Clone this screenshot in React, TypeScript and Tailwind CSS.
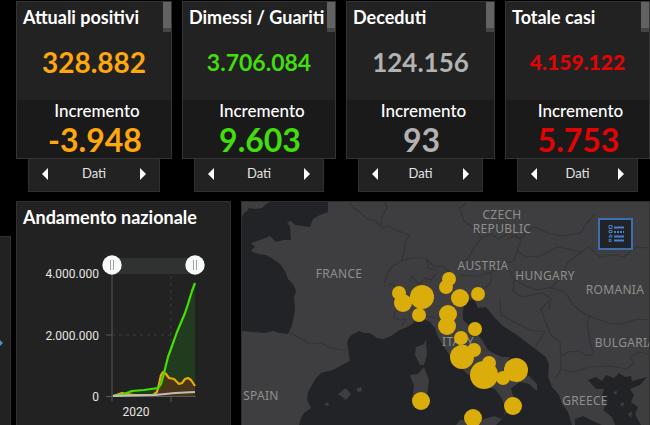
type Stat = {
  title: string;
  value: string;
  change: string;
  color: string;
  valueSize: string;
};

const stats: Stat[] = [
  { title: "Attuali positivi", value: "328.882", change: "-3.948", color: "text-[#ffa80b]", valueSize: "text-[28px] font-bold" },
  { title: "Dimessi / Guariti", value: "3.706.084", change: "9.603", color: "text-[#43dc0c]", valueSize: "text-[23px] font-bold" },
  { title: "Deceduti", value: "124.156", change: "93", color: "text-[#b2b2b2]", valueSize: "text-[26px] font-bold" },
  { title: "Totale casi", value: "4.159.122", change: "5.753", color: "text-[#e00505]", valueSize: "text-[21px] font-black" },
];

function StatCard({ title, value, change, color, valueSize }: Stat) {
  return (
    <section className="min-w-0">
      <div className="border border-[#343434] bg-[#222222]">
        <div className="flex h-[98px] flex-col">
          <div className="flex h-[30px] justify-between">
            <h2 className="pt-[3px] pl-1.5 text-[18px] leading-6 font-bold whitespace-nowrap text-white">{title}</h2>
            <span className="w-2 shrink-0 border-b-4 border-[#454549] bg-[#626262]" />
          </div>
          <p className={`pt-3 text-center leading-9 ${color} ${valueSize}`}>{value}</p>
        </div>
        <div className="h-[58px] bg-[#1a1a1a] text-center">
          <p className="pt-px pl-1.5 text-[17px] leading-5 font-medium text-white">Incremento</p>
          <p className={`pt-px pl-0.5 text-[32px] leading-9 font-bold ${color}`}>{change}</p>
        </div>
      </div>
      <div className="mx-3 flex h-[33px] items-center justify-between border border-t-0 border-[#303030] bg-[#222222] px-3 pb-0.5 text-white">
        <button type="button" aria-label="Precedente">
          <svg viewBox="0 0 8 12" className="h-3 w-2" fill="currentColor"><path d="M7 0v12L1 6z" /></svg>
        </button>
        <span className="text-[13px] text-[#e4e4e4]">Dati</span>
        <button type="button" aria-label="Successivo">
          <svg viewBox="0 0 8 12" className="h-3 w-2" fill="currentColor"><path d="M1 0v12l6-6z" /></svg>
        </button>
      </div>
    </section>
  );
}

function Handle({ x }: { x: number }) {
  return (
    <g>
      <circle cx={x} cy="265" r="9.7" fill="#f8faf9" />
      <path d={`M${x - 1.5} 260v10M${x + 1.5} 260v10`} stroke="#a2a2a2" strokeWidth="1" />
    </g>
  );
}

function TrendChart() {
  return (
    <svg viewBox="17 240 213 185" className="w-full font-[Lato,sans-serif]" role="img" aria-label="Andamento nazionale">
      <path d="M112 258H195V274H112z" fill="#303131" />
      <path d="M112 274V401M106 335H112M106 396.500H196M171 396V402" stroke="#585858" strokeWidth="1" fill="none" />
      <path d="M171 276V396M112 335H195" stroke="#3d3d3d" strokeDasharray="3 4" fill="none" />
      <path d="M124 395L132 391L144 390L158 388L161 384L163 377L168 357L177 332L185 313L192 291L195 283V396H124z" fill="#203f1c" fillOpacity=".85" />
      <path d="M113 396L119 394L122 393L134 395L153 395L157 392L159 384L161 375L163 372L169 378L174 379L179 384L182 384L186 379L190 379L193 383L195 387V396z" fill="#5a3214" fillOpacity=".7" />
      <path d="M113 396L119 394L122 393L127 394L134 395L153 395L157 392L159 384L161 375L163 372L166 374L169 378L174 379L179 384L182 383L185 379L188 378L191 380L195 386" fill="none" stroke="#e9a80b" strokeWidth="2.2" strokeLinejoin="round" />
      <path d="M113 396L124 394L132 391L144 390L158 388L161 384L163 377L168 357L172 346L177 332L185 313L188 304L192 291L195 283" fill="none" stroke="#43e000" strokeWidth="2.2" strokeLinejoin="round" />
      <path d="M113 396L155 395L175 393L195 392" fill="none" stroke="#bdbdbd" strokeWidth="2" />
      <Handle x={112} />
      <Handle x={195} />
      <g fill="#e6e6e6" fontSize="12" className="font-[Roboto,sans-serif]">
        <text x="99" y="278" textAnchor="end">4.000.000</text>
        <text x="99" y="340" textAnchor="end">2.000.000</text>
        <text x="99" y="401" textAnchor="end">0</text>
        <text x="136" y="416" textAnchor="middle">2020</text>
      </g>
    </svg>
  );
}

const cases = [
  [399, 293, 7], [403, 303, 9], [422, 297, 12], [449, 279, 7], [446, 287, 7], [460, 298, 9], [478, 294, 7],
  [419, 315, 7], [448, 314, 9], [447, 326, 9], [475, 329, 7], [461, 338, 7], [474, 350, 7], [462, 357, 12],
  [489, 363, 7], [484, 375, 14], [503, 378, 7], [516, 370, 12], [421, 401, 9], [513, 406, 9], [473, 418, 9],
];

const countries: [string, number, number][] = [
  ["FRANCE", 339, 278], ["AUSTRIA", 483, 270], ["HUNGARY", 545, 280], ["ROMANIA", 615, 294],
  ["BULGARIA", 625, 347], ["GREECE", 585, 405], ["SPAIN", 261, 400], ["ITALY", 458, 346],
];

function EuropeMap() {
  return (
    <svg viewBox="242 202 407 223" preserveAspectRatio="xMidYMin slice" className="h-full w-full" role="img" aria-label="Mappa dei casi">
      <rect x="242" y="202" width="407" height="223" fill="#3e3e40" />
      <g fill="#222327">
        <path d="M242 218L243 214L247 211L249 208L255 209L262 208L266 204L270 202H328V212L320 215L313 219L310 227L302 226L295 225L291 221L287 222L290 227L291 240L283 240L276 242L270 236L263 239L251 243L255 247L251 251L258 254L266 255L273 259L280 264L285 271L288 279L293 284L296 291L294 297L295 310L292 325L288 334L280 333L273 331L265 333L242 331z" />
        <path d="M299 425L301 418L304 413L311 408L307 400L308 392L316 378L321 373L333 370L342 365L350 361L349 355L347 342L350 336L359 331L364 333L370 333L377 338L383 339L391 336L398 331L409 326L416 321L423 319L430 322L435 328L438 337L443 345L450 356L460 365L466 373L477 380L486 386L495 389L501 397L506 408L504 415L502 419L494 416L478 421L460 420L456 425z" />
        <path d="M463 311L464 305L470 299L475 301L478 308L486 307L494 317L503 326L517 335L530 345L546 357L549 365L548 376L552 387L559 395L562 404L568 412L572 425H496L502 419L505 414L511 409L516 402L512 393L511 388L520 382L529 384L537 391L537 384L529 376L517 369L507 363L510 357L502 357L495 354L488 350L482 340L475 331L463 320z" />
        <path d="M588 380L596 377L602 381L606 375L614 378L619 373L625 377L631 376L632 381L647 377L640 385L630 389L634 395L631 402L638 407L635 414L641 425H615L612 417L603 410L607 402L602 396L604 389L596 389z" />
        <path d="M575 419L583 416L595 422L602 425H575z" />
      </g>
      <g fill="#3e3e40">
        <path d="M426 339L424 344L416 347L415 355L420 365L424 365L427 355z" />
        <path d="M424 367L418 374L410 375L414 386L412 400L420 408L427 396L429 380z" />
        <path d="M338 394L346 388L351 394L346 400z" />
        <path d="M356 389L361 387L362 391L358 392z" />
        <path d="M324 405L328 402L329 406z" />
        <path d="M613 392L617 391L616 395zM620 404L624 402L623 407zM628 414L632 411L631 418z" />
      </g>
      <g fill="none" stroke="#343437" strokeWidth="1.2" strokeLinejoin="round">
        <path d="M349 203L356 210L361 213L367 219L376 221L382 228L388 226L396 230L410 235L405 242L404 252L401 261L393 266L388 272L384 284M385 202L387 208L382 216L381 225M401 261L412 258L426 258L434 267L443 266L451 274M427 258L428 268L437 270M384 286L392 284L398 290M410 282L412 276L419 285L425 278L431 280L436 274" />
        <path d="M290 333L300 338L310 344L321 343L331 348L343 350L349 350M395 310L394 318L399 320L406 319L402 325M427 316L439 319" />
        <path d="M459 209L466 203M460 210L464 221L475 229L481 238L491 234L499 239L508 233L520 239L532 227L539 229L548 233L562 236L581 233L586 224L595 214M481 239L474 248L468 259L459 262M508 239L516 235L521 240L517 251L514 261L505 263L492 272L478 276L461 275M518 251L525 257L540 256L557 247L569 249L581 252L589 247L600 257L613 255L624 257L635 247L648 248M582 252L568 262L561 278L552 287L538 290L526 286L514 279L506 265M492 274L490 284L483 289M514 280L513 291L522 297L543 293L551 299L549 310" />
        <path d="M550 288L564 291L574 306L586 315L608 323L622 324L637 319L649 320M549 301L541 309L545 321L551 335L560 342L561 356L568 352L579 351L587 356L594 354L590 342L587 323L590 315M545 331L536 346M561 356L561 369L556 378M563 370L573 372L589 367L610 366L627 369L634 363L630 357L639 352L649 354M500 300L501 315L516 323L532 331L545 331" />
      </g>
      <g fill="#8f8f8d" fontSize="12" textAnchor="middle" className="font-['Noto_Sans',sans-serif] tracking-wide">
        <text>
          <tspan x="502" y="219">CZECH</tspan>
          <tspan x="502" y="233">REPUBLIC</tspan>
        </text>
        {countries.map(([name, x, y]) => (
          <text key={name} x={x} y={y}>{name}</text>
        ))}
      </g>
      <g fill="#dbad0b">
        {cases.map(([x, y, r]) => (
          <circle key={`${x}-${y}`} cx={x} cy={y} r={r} />
        ))}
      </g>
    </svg>
  );
}

export default function App() {
  return (
    <main className="flex min-h-screen flex-col bg-black pt-px font-[Lato,sans-serif]">
      <div className="grid grid-cols-[156fr_154fr_149fr_145fr] gap-2.5 pl-4">
        {stats.map((stat) => (
          <StatCard key={stat.title} {...stat} />
        ))}
      </div>
      <div className="mt-[9px] flex flex-1">
        <aside className="mt-[35px] flex w-[11px] shrink-0 items-start border border-b-0 border-l-0 border-[#303030] bg-[#222222] pt-[102px]">
          <button type="button" aria-label="Espandi" className="text-[#4c8fd0]">
            <svg viewBox="0 0 4 8" className="block h-2 w-1" fill="currentColor"><path d="M0 1l3 3-3 3z" /></svg>
          </button>
        </aside>
        <section className="ml-[5px] w-[215px] shrink-0 border border-b-0 border-[#303030] bg-[#222222]">
          <h2 className="h-[38px] pt-[3px] pl-1.5 text-[18px] leading-6 font-bold text-white">Andamento nazionale</h2>
          <TrendChart />
        </section>
        <section className="relative ml-2.5 min-h-56 flex-1 border border-b-0 border-[#303030]">
          <div className="absolute inset-0">
            <EuropeMap />
          </div>
          <button type="button" aria-label="Legenda" className="absolute top-4 right-4 flex h-8 w-[35px] items-center justify-center border-2 border-[#3b70b0] bg-[#222326] text-[#4680cc]">
            <svg viewBox="0 0 16 18" className="h-[18px] w-4" fill="none" stroke="currentColor">
              <path d="M6 2.500h10M6 11.500h10M6 15.500h10" strokeWidth="2" />
              <path d="M6 7h10" strokeWidth="2" strokeDasharray="2 1" />
              <path d="M1 .5h3v3H1zM1 5.500h3v2H1zM2.500 9.500l1.500 2.500H1zM1 14.500h2v2H1z" />
            </svg>
          </button>
        </section>
      </div>
    </main>
  );
}
